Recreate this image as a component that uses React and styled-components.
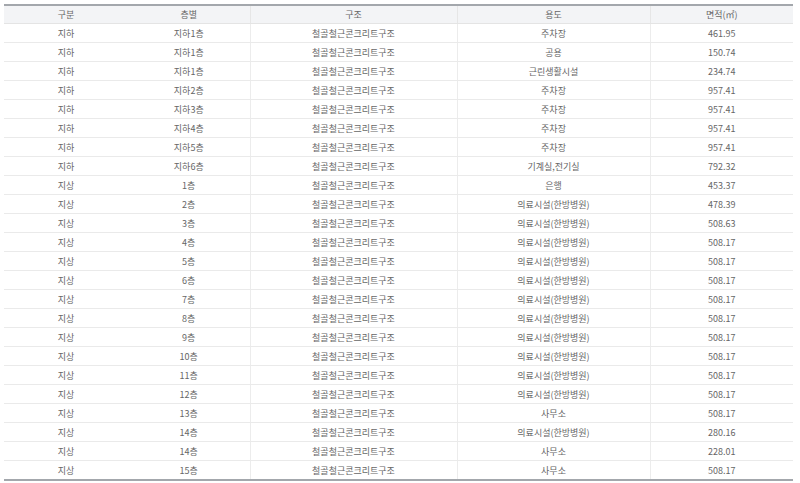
import React from "react";
import styled, { createGlobalStyle } from "styled-components";

const GlobalStyle = createGlobalStyle`
  html, body {
    margin: 0;
    padding: 0;
    background: #ffffff;
  }
`;

const Wrapper = styled.div`
  padding: 4px 7px 0 4px;
  font-family: "Noto Sans CJK KR", "Noto Sans", sans-serif;
`;

const Table = styled.table`
  width: 789px;
  border-collapse: collapse;
  table-layout: fixed;
  border-top: 2px solid #a3a7ac;
  border-bottom: 2px solid #a3a7ac;
`;

const Th = styled.th`
  height: 17px;
  padding: 0;
  background: #f3f4f6;
  color: #666;
  font-size: 9px;
  font-weight: 400;
  text-align: center;
  border-bottom: 1px solid #e4e4e4;
  border-left: ${(p) => (p.$divider ? "1px solid #e6e6e6" : "none")};
`;

const Td = styled.td`
  height: 18px;
  padding: 0;
  color: #666;
  font-size: 9px;
  text-align: center;
  border-bottom: 1px solid #eaeaea;
  border-left: ${(p) => (p.$divider ? "1px solid #ececec" : "none")};
  white-space: nowrap;
`;

const columns = [
  { label: "구분", width: 124 },
  { label: "층별", width: 122 },
  { label: "구조", width: 207, divider: true },
  { label: "용도", width: 193, divider: true },
  { label: "면적(㎡)", width: 143, divider: true },
];

const S = "철골철근콘크리트구조";
const H = "의료시설(한방병원)";

const rows = [
  ["지하", "지하1층", S, "주차장", "461.95"],
  ["지하", "지하1층", S, "공용", "150.74"],
  ["지하", "지하1층", S, "근린생활시설", "234.74"],
  ["지하", "지하2층", S, "주차장", "957.41"],
  ["지하", "지하3층", S, "주차장", "957.41"],
  ["지하", "지하4층", S, "주차장", "957.41"],
  ["지하", "지하5층", S, "주차장", "957.41"],
  ["지하", "지하6층", S, "기계실,전기실", "792.32"],
  ["지상", "1층", S, "은행", "453.37"],
  ["지상", "2층", S, H, "478.39"],
  ["지상", "3층", S, H, "508.63"],
  ["지상", "4층", S, H, "508.17"],
  ["지상", "5층", S, H, "508.17"],
  ["지상", "6층", S, H, "508.17"],
  ["지상", "7층", S, H, "508.17"],
  ["지상", "8층", S, H, "508.17"],
  ["지상", "9층", S, H, "508.17"],
  ["지상", "10층", S, H, "508.17"],
  ["지상", "11층", S, H, "508.17"],
  ["지상", "12층", S, H, "508.17"],
  ["지상", "13층", S, "사무소", "508.17"],
  ["지상", "14층", S, H, "280.16"],
  ["지상", "14층", S, "사무소", "228.01"],
  ["지상", "15층", S, "사무소", "508.17"],
];

export default function App() {
  return (
    <>
      <GlobalStyle />
      <Wrapper>
        <Table>
          <colgroup>
            {columns.map((c) => (
              <col key={c.label} style={{ width: c.width }} />
            ))}
          </colgroup>
          <thead>
            <tr>
              {columns.map((c) => (
                <Th key={c.label} $divider={c.divider}>
                  {c.label}
                </Th>
              ))}
            </tr>
          </thead>
          <tbody>
            {rows.map((r, i) => (
              <tr key={i}>
                {r.map((cell, j) => (
                  <Td key={j} $divider={columns[j].divider}>
                    {cell}
                  </Td>
                ))}
              </tr>
            ))}
          </tbody>
        </Table>
      </Wrapper>
    </>
  );
}
